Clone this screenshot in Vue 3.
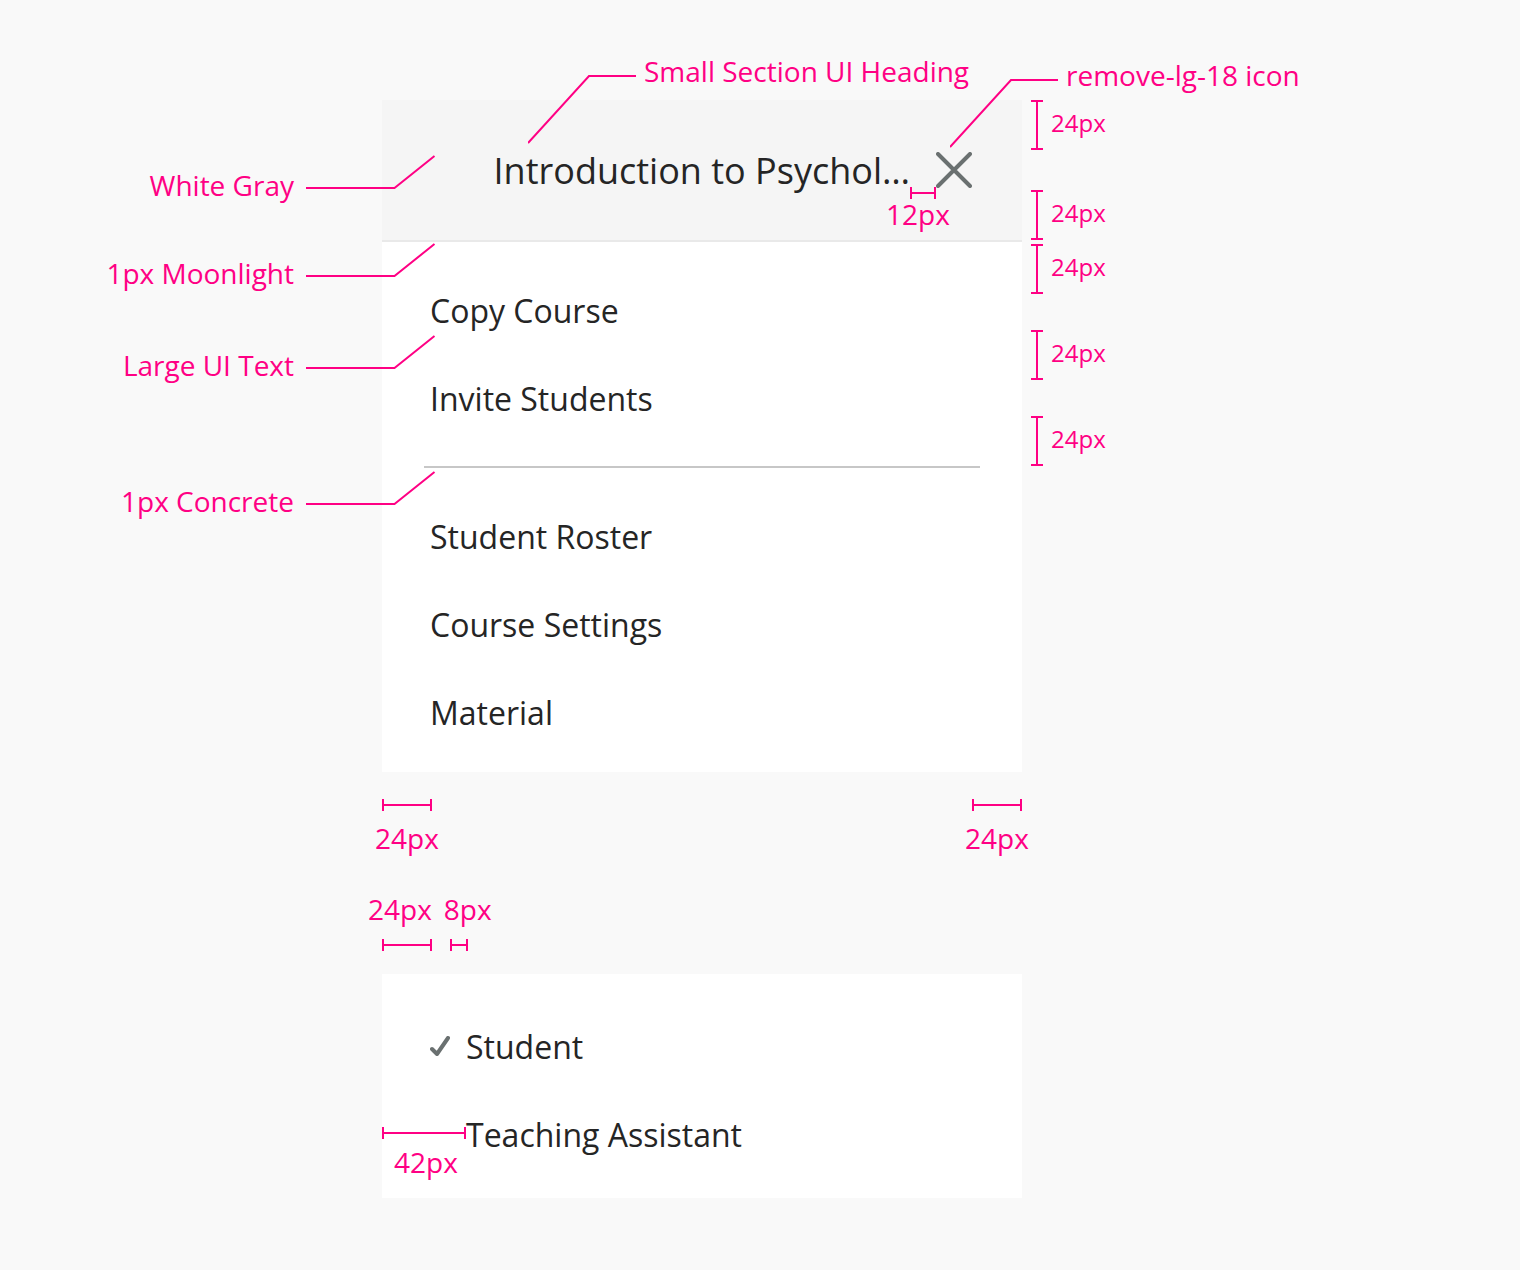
<script setup>
const callouts = [
  { text: 'White Gray', space: 55 },
  { text: '1px Moonlight', space: 42 },
  { text: 'Large UI Text', space: 46 },
  { text: '1px Concrete', space: 90 }
]

const heights = [
  { text: '24px', space: 0 },
  { text: '24px', space: 40 },
  { text: '24px', space: 4 },
  { text: '24px', space: 36 },
  { text: '24px', space: 36 }
]

const courseActions = ['Copy Course', 'Invite Students']
const courseLinks = ['Student Roster', 'Course Settings', 'Material']
const roles = [
  { name: 'Student', selected: true },
  { name: 'Teaching Assistant', selected: false }
]
</script>

<template>
  <main class="spec">
    <aside class="callouts">
      <div v-for="item in callouts" :key="item.text" class="callout" :style="{ marginTop: item.space + 'px' }">
        <span class="label">{{ item.text }}</span>
        <svg class="leader" width="130" height="46" viewBox="0 0 130 46" aria-hidden="true">
          <path d="M0 33H88.5L128.5 1" />
        </svg>
      </div>
    </aside>

    <div class="column">
      <section class="card">
        <header class="card-header">
          <h1 class="title">Introduction to Psychol…</h1>
          <button class="close" type="button" aria-label="Close">
            <svg width="36" height="36" viewBox="0 0 36 36" aria-hidden="true">
              <path d="M2 2L34 34M34 2L2 34" />
            </svg>
          </button>
        </header>
        <nav class="menu">
          <ul class="group">
            <li v-for="name in courseActions" :key="name">
              <button class="item" type="button">{{ name }}</button>
            </li>
          </ul>
          <hr class="divider" />
          <ul class="group">
            <li v-for="name in courseLinks" :key="name">
              <button class="item" type="button">{{ name }}</button>
            </li>
          </ul>
        </nav>

        <div class="pin pin-heading">
          <svg class="leader" width="108" height="70" viewBox="0 0 108 70" aria-hidden="true">
            <path d="M0 68L61 1H108" />
          </svg>
          <span class="label">Small Section UI Heading</span>
        </div>
        <div class="pin pin-icon">
          <svg class="leader" width="108" height="70" viewBox="0 0 108 70" aria-hidden="true">
            <path d="M0 68L61 1H108" />
          </svg>
          <span class="label">remove-lg-18 icon</span>
        </div>
        <div class="pin-gap">
          <span class="bar bar-12"></span>
          <span class="label">12px</span>
        </div>
      </section>

      <div class="insets">
        <div class="measure">
          <span class="bar bar-24"></span>
          <span class="label">24px</span>
        </div>
        <div class="measure">
          <span class="bar bar-24"></span>
          <span class="label">24px</span>
        </div>
      </div>

      <div class="check-labels">
        <span class="label">24px</span>
        <span class="label">8px</span>
      </div>
      <div class="check-bars">
        <span class="bar bar-24"></span>
        <span class="bar bar-8"></span>
      </div>

      <section class="card roles">
        <ul class="group">
          <li v-for="role in roles" :key="role.name">
            <button class="item role" type="button" :aria-pressed="role.selected">
              <span class="mark">
                <svg v-if="role.selected" width="20" height="20" viewBox="0 0 20 20" aria-hidden="true">
                  <path d="M2 13L7 18L18 2" />
                </svg>
              </span>
              {{ role.name }}
            </button>
          </li>
        </ul>
        <div class="pin-indent">
          <span class="bar bar-42"></span>
          <span class="label">42px</span>
        </div>
      </section>
    </div>

    <aside class="heights">
      <div v-for="(item, index) in heights" :key="index" class="height" :style="{ marginTop: item.space + 'px' }">
        <span class="post"></span>
        <span class="label small">{{ item.text }}</span>
      </div>
    </aside>
  </main>
</template>

<style>
body {
  margin: 0;
  background: #f9f9f9;
}
</style>

<style scoped>
.spec {
  --pink: #ff0084;
  display: grid;
  grid-template-columns: 1fr minmax(0, 640px) 1fr;
  box-sizing: border-box;
  min-height: 100vh;
  padding: 100px 116px 72px 0;
  color: #252525;
  font-family: "Open Sans", "Noto Sans", sans-serif;
}

.label {
  color: var(--pink);
  font-size: 28px;
  line-height: 32px;
  white-space: nowrap;
}

.small {
  font-size: 24px;
}

.leader {
  flex: none;
  fill: none;
  stroke: var(--pink);
  stroke-width: 2;
}

.callouts {
  position: relative;
  z-index: 1;
}

.callout {
  display: flex;
  align-items: flex-end;
  justify-content: flex-end;
  gap: 12px;
  margin-right: -54px;
}

.card {
  position: relative;
  background: #fff;
}

.card-header {
  display: flex;
  align-items: center;
  justify-content: flex-end;
  gap: 26px;
  height: 140px;
  padding: 0 50px 0 48px;
  border-bottom: 2px solid #e9e9e9;
  background: #f5f5f5;
}

.title {
  margin: 0;
  padding-top: 2px;
  font-size: 36px;
  font-weight: 400;
  line-height: 44px;
  white-space: nowrap;
}

.close {
  display: flex;
  padding: 0;
  border: 0;
  background: none;
}

.close path {
  fill: none;
  stroke: #6a7070;
  stroke-width: 4;
  stroke-linecap: round;
}

.menu {
  padding: 48px 42px 38px;
}

.group {
  display: flex;
  flex-direction: column;
  gap: 46px;
  margin: 0;
  padding: 0 6px;
  list-style: none;
}

.item {
  display: block;
  width: 100%;
  padding: 0;
  border: 0;
  background: none;
  color: inherit;
  font: inherit;
  font-size: 32px;
  line-height: 42px;
  text-align: left;
}

.divider {
  height: 2px;
  margin: 46px 0 48px;
  border: 0;
  background: #c7c7c7;
}

.bar {
  flex: none;
  box-sizing: border-box;
  height: 12px;
  border: solid var(--pink);
  border-width: 0 2px;
  background: linear-gradient(var(--pink), var(--pink)) center / 100% 2px no-repeat;
}

.bar-8 {
  width: 18px;
}

.bar-12 {
  width: 26px;
}

.bar-24 {
  width: 50px;
}

.bar-42 {
  width: 84px;
}

.pin {
  position: absolute;
  display: flex;
  gap: 8px;
}

.pin .leader {
  margin-top: 20px;
}

.pin-heading {
  top: -45px;
  left: 146px;
}

.pin-icon {
  top: -41px;
  left: 568px;
}

.pin-gap {
  position: absolute;
  top: 87px;
  left: 504px;
  display: flex;
  flex-direction: column;
}

.pin-gap .bar {
  margin: 0 0 -1px 24px;
}

.insets {
  display: flex;
  justify-content: space-between;
  margin-top: 27px;
}

.measure {
  display: flex;
  flex-direction: column;
  align-items: center;
  gap: 11px;
  width: 50px;
}

.check-labels {
  display: flex;
  gap: 12px;
  margin: 39px 0 0 -14px;
}

.check-bars {
  display: flex;
  gap: 18px;
  margin: 14px 0 23px;
}

.roles {
  padding: 52px 42px 42px;
}

.role {
  display: flex;
  align-items: center;
  gap: 16px;
}

.mark {
  display: flex;
  align-items: flex-start;
  width: 20px;
  height: 22px;
}

.mark path {
  fill: none;
  stroke: #6a7070;
  stroke-width: 4;
  stroke-linecap: round;
  stroke-linejoin: round;
}

.pin-indent {
  position: absolute;
  top: 153px;
  left: 0;
  display: flex;
  flex-direction: column;
  gap: 7px;
}

.pin-indent .label {
  padding-left: 12px;
}

.heights {
  padding-left: 9px;
}

.height {
  display: flex;
  gap: 8px;
}

.height .label {
  padding-top: 7px;
}

.post {
  flex: none;
  box-sizing: border-box;
  width: 12px;
  height: 50px;
  border: solid var(--pink);
  border-width: 2px 0;
  background: linear-gradient(var(--pink), var(--pink)) center / 2px 100% no-repeat;
}
</style>
